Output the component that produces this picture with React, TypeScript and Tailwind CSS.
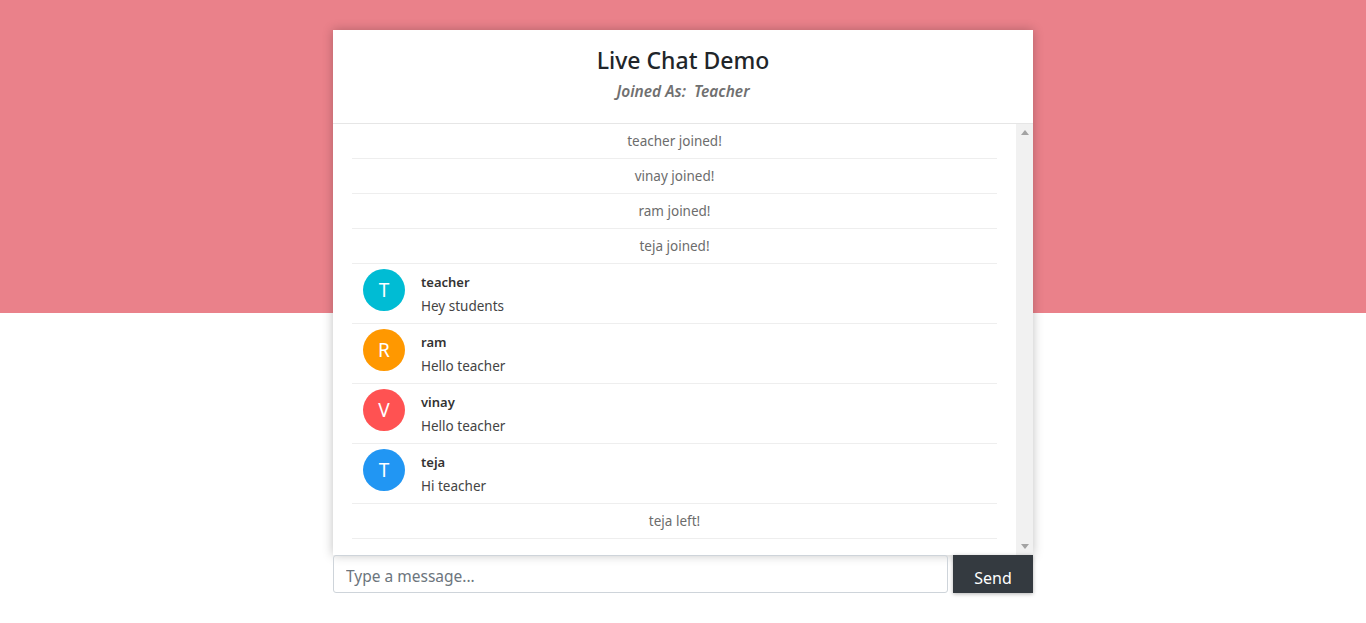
import React from "react";

const sys = ["teacher joined!", "vinay joined!", "ram joined!", "teja joined!"];
const msgs = [
  { name: "teacher", text: "Hey students", color: "bg-[#00bcd4]", l: "T" },
  { name: "ram", text: "Hello teacher", color: "bg-[#ff9800]", l: "R" },
  { name: "vinay", text: "Hello teacher", color: "bg-[#ff5252]", l: "V" },
  { name: "teja", text: "Hi teacher", color: "bg-[#2196f3]", l: "T" },
];

function Sys({ t }: { t: string }) {
  return (
    <div className="h-[35px] flex items-center justify-center border-b border-[#eeeeee] text-[13.5px] text-[#6c6c6c]">
      {t}
    </div>
  );
}

export default function App() {
  return (
    <div className="min-h-[623px] bg-white relative" style={{ fontFamily: '"Noto Sans", "Open Sans", sans-serif' }}>
      <div className="absolute top-0 left-0 right-0 h-[313px] bg-[#ea818a]" />
      <div className="relative pt-[30px] flex flex-col items-center">
        <div className="w-[700px] bg-white shadow-[0_0_10px_rgba(0,0,0,0.25)]">
          <div className="h-[94px] border-b border-[#e6e6e6] flex flex-col items-center">
            <div className="mt-[14px] text-[23px] leading-[32px] font-medium text-[#212529]">Live Chat Demo</div>
            <div className="mt-[5px] text-[15.5px] leading-[20px] italic font-semibold text-[#707070]">Joined As:&nbsp; Teacher</div>
          </div>
          <div className="h-[431px] flex">
            <div className="flex-1 overflow-hidden px-[19px]">
              {sys.map((s) => (
                <Sys key={s} t={s} />
              ))}
              {msgs.map((m, i) => (
                <div key={i} className="h-[60px] flex items-start border-b border-[#eeeeee]">
                  <div className={`mt-[5px] ml-[11px] w-[42px] h-[42px] rounded-full ${m.color} text-white flex items-center justify-center text-[19px]`}>
                    {m.l}
                  </div>
                  <div className="mt-[9px] ml-[16px] flex flex-col">
                    <div className="text-[13px] leading-[18px] font-semibold text-[#333]">{m.name}</div>
                    <div className="mt-[6px] text-[13.5px] leading-[18px] text-[#444]">{m.text}</div>
                  </div>
                </div>
              ))}
              <Sys t="teja left!" />
            </div>
            <div className="w-[17px] bg-[#f1f1f1] flex flex-col items-center justify-between py-[6px]">
              <svg width="8" height="5" viewBox="0 0 8 5"><path d="M0 5 L4 0 L8 5 Z" fill="#a3a3a3" /></svg>
              <svg width="8" height="5" viewBox="0 0 8 5"><path d="M0 0 L4 5 L8 0 Z" fill="#a3a3a3" /></svg>
            </div>
          </div>
        </div>
        <div className="w-[700px] flex gap-[5px]">
          <input
            placeholder="Type a message..."
            className="flex-1 h-[38px] border border-[#ced4da] rounded-[3px] px-[12px] pt-[3px] text-[15.5px] text-[#495057] placeholder:text-[#6c757d] outline-none"
          />
          <button className="w-[80px] h-[38px] bg-[#343a40] text-white text-[16px] pt-[7px] shadow-[0_1px_4px_rgba(0,0,0,0.3)]">Send</button>
        </div>
      </div>
    </div>
  );
}
